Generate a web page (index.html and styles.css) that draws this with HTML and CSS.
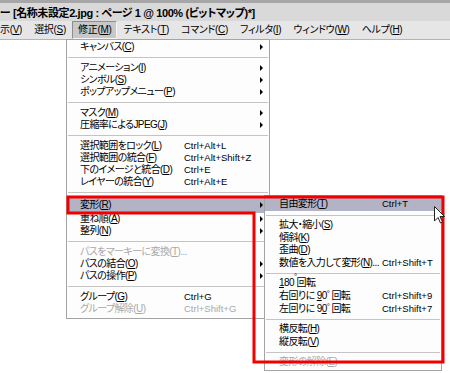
FILE: index.html
```html
<!DOCTYPE html>
<html lang="ja">
<head>
  <meta charset="UTF-8">
  <title>修正メニュー</title>
  <link rel="stylesheet" href="styles.css">
</head>
<body>

  <div class="screen">
    <div class="titlebar">
      <span class="title">ー [名称未設定2.jpg : ページ 1 @ 100% (ビットマップ)*]</span>
    </div>

    <div class="menubar">
      <span class="mb-item first">示(<u>V</u>)</span>
      <span class="mb-item">選択(<u>S</u>)</span>
      <span class="mb-item open">修正(<u>M</u>)</span>
      <span class="mb-item">テキスト(<u>T</u>)</span>
      <span class="mb-item">コマンド(<u>C</u>)</span>
      <span class="mb-item">フィルタ(<u>I</u>)</span>
      <span class="mb-item">ウィンドウ(<u>W</u>)</span>
      <span class="mb-item">ヘルプ(<u>H</u>)</span>
    </div>

    <div class="canvas"></div>

    <!-- 修正メニュー -->
    <div class="menu main-menu">
      <div class="item sub">キャンバス(<u>C</u>)</div>
      <div class="sep"></div>
      <div class="item sub">アニメーション(<u>I</u>)</div>
      <div class="item sub">シンボル(<u>S</u>)</div>
      <div class="item sub">ポップアップメニュー(<u>P</u>)</div>
      <div class="sep"></div>
      <div class="item sub">マスク(<u>M</u>)</div>
      <div class="item sub">圧縮率によるJPEG(<u>J</u>)</div>
      <div class="sep"></div>
      <div class="item"><span class="label">選択範囲をロック(<u>L</u>)</span><span class="key">Ctrl+Alt+L</span></div>
      <div class="item"><span class="label">選択範囲の統合(<u>F</u>)</span><span class="key">Ctrl+Alt+Shift+Z</span></div>
      <div class="item"><span class="label">下のイメージと統合(<u>D</u>)</span><span class="key">Ctrl+E</span></div>
      <div class="item"><span class="label">レイヤーの統合(<u>Y</u>)</span><span class="key">Ctrl+Alt+E</span></div>
      <div class="sep"></div>
      <div class="item sub active">変形(<u>R</u>)</div>
      <div class="item sub">重ね順(<u>A</u>)</div>
      <div class="item sub">整列(<u>N</u>)</div>
      <div class="sep"></div>
      <div class="item disabled">パスをマーキーに変換(<u>T</u>)...</div>
      <div class="item sub">パスの結合(<u>O</u>)</div>
      <div class="item sub">パスの操作(<u>P</u>)</div>
      <div class="sep"></div>
      <div class="item"><span class="label">グループ(<u>G</u>)</span><span class="key">Ctrl+G</span></div>
      <div class="item disabled"><span class="label">グループ解除(<u>U</u>)</span><span class="key">Ctrl+Shift+G</span></div>
    </div>

    <!-- 変形サブメニュー -->
    <div class="menu sub-menu">
      <div class="item active"><span class="label">自由変形(<u>T</u>)</span><span class="key">Ctrl+T</span></div>
      <div class="sep"></div>
      <div class="item">拡大・縮小(<u>S</u>)</div>
      <div class="item">傾斜(<u>K</u>)</div>
      <div class="item">歪曲(<u>D</u>)</div>
      <div class="item"><span class="label">数値を入力して変形(<u>N</u>)...</span><span class="key">Ctrl+Shift+T</span></div>
      <div class="sep"></div>
      <div class="item"><u>1</u>80<sup>°</sup> 回転</div>
      <div class="item"><span class="label">右回りに <u>9</u>0<sup>°</sup> 回転</span><span class="key">Ctrl+Shift+9</span></div>
      <div class="item"><span class="label">左回りに 9<u>0</u><sup>°</sup> 回転</span><span class="key">Ctrl+Shift+7</span></div>
      <div class="sep"></div>
      <div class="item">横反転(<u>H</u>)</div>
      <div class="item">縦反転(<u>V</u>)</div>
      <div class="sep"></div>
      <div class="item disabled">変形の解除(<u>E</u>)</div>
    </div>

    <svg class="marks" width="450" height="373" viewBox="0 0 450 373">
      <polygon points="68,197 443,197 443,362 254,362 254,213 68,213" fill="none" stroke="#f20000" stroke-width="3"/>
      <path d="M434.5 206.5 L434.5 221 L438 217.5 L440.5 223 L442.5 222 L440 216.5 L444.5 216.5 Z" fill="#fff" stroke="#222" stroke-width="1" stroke-linejoin="round"/>
    </svg>
  </div>

</body>
</html>
```

FILE: styles.css
```css
body {
  margin: 0;
  background: #fff;
  font-family: "Liberation Sans", "Noto Sans CJK JP", sans-serif;
  font-feature-settings: "palt";
  color: #000;
}

.screen {
  position: relative;
  width: 450px;
  height: 373px;
  overflow: hidden;
  display: flex;
  flex-direction: column;
}

.titlebar {
  height: 18px;
  border-top: 3px solid #a6a6a6;
  background: #d9d9d9;
  display: flex;
  align-items: center;
}

.title {
  font-size: 11px;
  font-weight: bold;
  letter-spacing: -0.4px;
  white-space: nowrap;
}

.menubar {
  height: 18px;
  background: #e6e6e6;
  border-bottom: 1px solid #b4b4b4;
  display: flex;
  align-items: center;
  font-size: 10px;
  letter-spacing: -0.3px;
  white-space: nowrap;
}

.mb-item {
  padding: 0 5px;
  height: 16px;
  line-height: 16px;
  border: 1px solid transparent;
}

.mb-item.first {
  margin-left: -6px;
}

.mb-item.open {
  background: #c8c8c8;
  border-color: #8e8e8e #f6f6f6 #f6f6f6 #8e8e8e;
}

.canvas {
  flex: 1;
  background: #fff;
}

/* dropdown menus */
.menu {
  position: absolute;
  background: #fdfdfd;
  border: 1px solid #a4a4a4;
  font-size: 10px;
  letter-spacing: -0.6px;
  white-space: nowrap;
  display: flex;
  flex-direction: column;
}

.main-menu {
  left: 66px;
  top: 39px;
  width: 202px;
  padding: 1px 0 3px;
}

.sub-menu {
  left: 264px;
  top: 195px;
  width: 176px;
  padding: 1px 0;
}

.item {
  position: relative;
  height: 12px;
  line-height: 12px;
  padding-left: 13px;
  display: flex;
}

.sub-menu .item {
  height: 12.6px;
  line-height: 12.6px;
  padding-left: 14px;
}

.label {
  width: 104px;
}

.sub-menu .label {
  width: 103px;
}

.key {
  font-size: 9.5px;
  letter-spacing: 0;
}

.item.active {
  background: #b3b3c6;
  height: 16px;
  line-height: 16px;
}

.sub-menu .item.active {
  height: 14px;
  line-height: 14px;
}

.item.disabled {
  color: #a9a9a9;
}

.item.sub::after {
  content: "";
  position: absolute;
  right: 6px;
  top: 50%;
  margin-top: -3px;
  border-left: 3px solid #000;
  border-top: 3px solid transparent;
  border-bottom: 3px solid transparent;
}

.sep {
  height: 9px;
  display: flex;
  align-items: center;
  margin: 0 1px;
}

.sub-menu .sep {
  height: 8px;
}

.sep::before {
  content: "";
  flex: 1;
  border-top: 1px solid #c4c4c4;
}

sup {
  font-size: 8px;
  line-height: 0;
  vertical-align: 3px;
}

.marks {
  position: absolute;
  left: 0;
  top: 0;
  pointer-events: none;
}
```
